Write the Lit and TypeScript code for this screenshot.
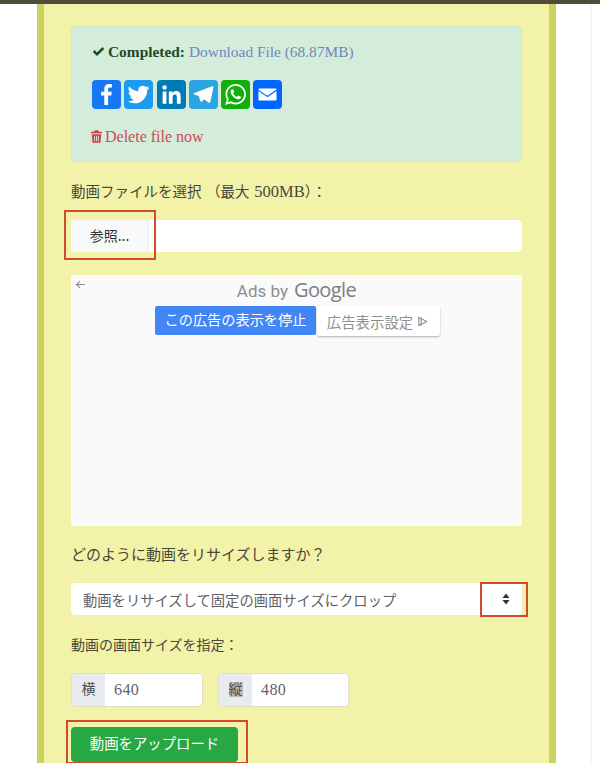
import { LitElement, css, html } from "lit";
import { customElement } from "lit/decorators.js";

const shareIcons = [
  { name: "facebook", bg: "#1877f2", d: "M17.78 27.5V17.008h3.522l.527-4.09h-4.05v-2.61c0-1.182.33-1.99 2.023-1.99h2.166V4.66c-.375-.05-1.66-.16-3.155-.16-3.123 0-5.26 1.905-5.26 5.405v3.016h-3.53v4.09h3.53V27.5h4.223z" },
  { name: "twitter", bg: "#1d9bf0", d: "M28 8.557a9.913 9.913 0 0 1-2.828.775 4.93 4.93 0 0 0 2.166-2.725 9.738 9.738 0 0 1-3.13 1.194 4.92 4.92 0 0 0-3.593-1.55 4.924 4.924 0 0 0-4.794 6.049c-4.09-.21-7.72-2.17-10.15-5.15a4.942 4.942 0 0 0-.665 2.477c0 1.71.87 3.214 2.19 4.1a4.968 4.968 0 0 1-2.23-.616v.06c0 2.39 1.7 4.38 3.952 4.83-.414.115-.85.174-1.297.174-.318 0-.626-.03-.928-.086a4.935 4.935 0 0 0 4.6 3.42 9.893 9.893 0 0 1-6.114 2.107c-.398 0-.79-.023-1.175-.068a13.953 13.953 0 0 0 7.55 2.213c9.056 0 14.01-7.507 14.01-14.013 0-.213-.005-.426-.015-.637.96-.695 1.795-1.56 2.455-2.55z" },
  { name: "linkedin", bg: "#007bb5", d: "M6.227 12.61h4.19v13.48h-4.19V12.61zm2.095-6.7a2.43 2.43 0 0 1 0 4.86c-1.344 0-2.428-1.09-2.428-2.43s1.084-2.43 2.428-2.43m4.72 6.7h4.02v1.84h.058c.56-1.058 1.927-2.176 3.965-2.176 4.238 0 5.02 2.792 5.02 6.42v7.395h-4.183v-6.56c0-1.564-.03-3.574-2.178-3.574-2.18 0-2.514 1.7-2.514 3.46v6.668h-4.187V12.61z" },
  { name: "telegram", bg: "#2ca5e0", d: "M25.515 6.896 6.027 14.41c-1.33.534-1.322 1.276-.243 1.606l5 1.56 1.72 5.66c.226.625.115.873.77.873.506 0 .73-.235 1.012-.51l2.43-2.363 5.056 3.734c.93.514 1.602.25 1.834-.863l3.32-15.638c.338-1.363-.52-1.98-1.41-1.577z", fold: "M11.5 18 21.5 11.5 14.5 18.5 13.5 23z" },
  { name: "whatsapp", bg: "#12af0a", d: "M16.21 4.41C9.973 4.41 4.917 9.465 4.917 15.7c0 2.134.592 4.13 1.62 5.832L4.5 27.59l6.25-2.002a11.241 11.241 0 0 0 5.46 1.404c6.234 0 11.29-5.055 11.29-11.29 0-6.237-5.056-11.292-11.29-11.292zm0 20.69c-1.91 0-3.69-.57-5.173-1.553l-3.61 1.156 1.173-3.49a9.345 9.345 0 0 1-1.79-5.512c0-5.18 4.217-9.4 9.4-9.4 5.183 0 9.397 4.22 9.397 9.4 0 5.188-4.214 9.4-9.398 9.4zm5.293-6.832c-.284-.155-1.673-.906-1.934-1.012-.265-.106-.455-.16-.658.12s-.78.91-.954 1.096c-.176.186-.345.203-.628.048-.282-.154-1.2-.494-2.264-1.517-.83-.795-1.373-1.76-1.53-2.055-.158-.295 0-.445.15-.584.134-.124.3-.326.45-.488.15-.163.203-.28.306-.47.104-.19.06-.36-.005-.506-.066-.147-.59-1.587-.81-2.173-.218-.586-.46-.498-.63-.505-.168-.007-.358-.038-.55-.045-.19-.007-.51.054-.78.332-.277.274-1.05.943-1.1 2.362-.055 1.418.926 2.826 1.064 3.023.137.2 1.874 3.272 4.76 4.537 2.888 1.264 2.9.878 3.43.85.53-.027 1.734-.633 2-1.297.266-.664.287-1.24.22-1.363-.07-.123-.26-.203-.54-.357z" },
  { name: "email", bg: "#0166ff", d: "M26 21.25v-9s-9.1 6.35-9.984 6.68C15.144 18.616 6 12.25 6 12.25v9c0 1.25.266 1.5 1.5 1.5h17c1.266 0 1.5-.22 1.5-1.5zm-.015-10.765c0-.91-.265-1.235-1.485-1.235h-17c-1.255 0-1.5.39-1.5 1.3l.015.14s9.035 6.22 10 6.56c1.02-.395 9.985-6.7 9.985-6.7l-.015-.065z" },
];

@customElement("app-root")
export class AppRoot extends LitElement {
  static styles = css`
    :host {
      display: block;
      position: relative;
      height: 763px;
      overflow: hidden;
      background: #fff;
      font-family: "Liberation Serif", "Noto Sans CJK JP", serif;
      font-size: 16px;
      color: #46483a;
    }
    .top-bar {
      height: 4px;
      background: #504c3a;
    }
    .panel {
      box-sizing: border-box;
      width: 519px;
      height: 759px;
      margin-left: 37px;
      padding: 22px 27px 0;
      background: #f3f2a9;
      border-left: 7px solid #cbd35c;
      border-right: 7px solid #cbd35c;
    }
    .edge {
      position: absolute;
      top: 4px;
      left: 591px;
      width: 1px;
      height: 759px;
      background: #f1f1f1;
    }
    .alert {
      box-sizing: border-box;
      height: 136px;
      padding: 15px 20px 0;
      background: #d4edda;
      border: 1px solid #d0e8cc;
      border-radius: 3px;
      color: #1d4a29;
    }
    .status {
      display: flex;
      align-items: center;
      height: 19px;
      font-size: 15.4px;
    }
    .status svg {
      width: 13px;
      height: 13px;
      margin-right: 3px;
      fill: #1d4a29;
    }
    .status a {
      margin-left: 4px;
      color: #6f86bf;
    }
    .share {
      display: flex;
      gap: 3.3px;
      margin-top: 19px;
    }
    .share span {
      display: block;
      width: 29px;
      height: 29px;
      border-radius: 4px;
    }
    .share svg {
      display: block;
      width: 29px;
      height: 29px;
      fill: #fff;
    }
    .share svg .fold {
      fill: #c3dff0;
    }
    .delete {
      display: flex;
      align-items: center;
      height: 19px;
      margin-top: 18px;
      margin-left: -1px;
      color: #cc4a55;
    }
    .delete svg {
      width: 11px;
      height: 13px;
      margin-right: 3px;
      fill: #cc3d4b;
    }
    .label {
      height: 20px;
      font-size: 14px;
      line-height: 20px;
    }
    .l1 {
      margin-top: 20px;
      font-size: 14.5px;
      word-spacing: 1px;
    }
    .l1 .num {
      font-size: 16.5px;
    }
    .file {
      display: flex;
      height: 32px;
      margin-top: 18px;
      background: #fff;
      border-radius: 4px;
    }
    .file-btn {
      width: 77px;
      border-right: 1px solid #ebebf0;
      background: #f8f9fb;
      font-family: "Noto Sans CJK JP", sans-serif;
      font-size: 14px;
      line-height: 31px;
      text-align: center;
      color: #333;
    }
    .ad {
      position: relative;
      height: 251px;
      margin-top: 23px;
      background: #fafafa;
      font-family: Roboto, "Noto Sans CJK JP", sans-serif;
    }
    .ad-back {
      position: absolute;
      top: 4px;
      left: 4px;
      width: 11px;
      height: 11px;
      fill: none;
      stroke: #8a8a8a;
      stroke-width: 1;
    }
    .ad-by {
      display: flex;
      justify-content: center;
      align-items: baseline;
      gap: 6px;
      height: 31px;
      font-size: 17px;
      line-height: 30px;
      color: #8f8f8f;
    }
    .ad-by b {
      font-family: "Open Sans", sans-serif;
      font-size: 20px;
      font-weight: 500;
      letter-spacing: -0.6px;
      color: #7d7d7d;
    }
    .ad-actions {
      display: flex;
      gap: 1px;
      padding-left: 84px;
    }
    .ad-stop {
      width: 161px;
      height: 29px;
      background: #4285f4;
      border-radius: 2px;
      color: #fff;
      font-size: 14.2px;
      line-height: 29px;
      text-align: center;
    }
    .ad-prefs {
      display: flex;
      align-items: center;
      justify-content: center;
      gap: 4px;
      width: 123px;
      height: 30px;
      padding-right: 2px;
      box-sizing: border-box;
      background: #fff;
      border-radius: 2px;
      box-shadow: 0 1px 2px rgba(0, 0, 0, 0.3);
      color: #8f8f8f;
      font-size: 14.4px;
    }
    .ad-prefs svg {
      width: 11px;
      height: 11px;
      fill: none;
      stroke: #8a8a8a;
      stroke-width: 1.2;
    }
    .l2 {
      margin-top: 19px;
      font-size: 15px;
    }
    .select {
      display: flex;
      align-items: center;
      justify-content: space-between;
      box-sizing: border-box;
      height: 32px;
      margin-top: 18px;
      padding: 0 12px 0 12px;
      background: #fff;
      border-radius: 4px;
      font-size: 14.3px;
      color: #5e6166;
    }
    .select svg {
      width: 8px;
      height: 12px;
      fill: #333;
    }
    .l3 {
      margin-top: 21px;
    }
    .sizes {
      display: flex;
      gap: 15px;
      margin-top: 17px;
    }
    .group {
      display: flex;
      box-sizing: border-box;
      height: 34px;
      background: #fff;
      border: 1px solid #e0e0c8;
      border-radius: 4px;
      overflow: hidden;
    }
    .g1 { width: 132px; }
    .g2 { width: 131px; }
    .addon {
      width: 33px;
      background: #e9ecef;
      font-size: 14px;
      line-height: 32px;
      text-align: center;
      color: #495057;
    }
    .addon span.sel {
      background: #bdbdbd;
    }
    .value {
      padding-left: 9px;
      font-size: 16px;
      line-height: 31px;
      letter-spacing: 0.4px;
      color: #5f6468;
    }
    .upload {
      width: 167px;
      height: 35px;
      margin-top: 20px;
      background: #28a745;
      border-radius: 4px;
      color: #fff;
      font-size: 14.4px;
      line-height: 35px;
      text-align: center;
    }
    .mark {
      position: absolute;
      box-sizing: border-box;
      border: 2px solid #cf4a30;
    }
    .m1 { left: 64px; top: 210px; width: 92px; height: 50px; }
    .m2 { left: 480px; top: 582px; width: 48px; height: 35px; }
    .m3 { left: 66px; top: 720px; width: 182px; height: 44px; }
  `;

  render() {
    return html`
      <div class="top-bar"></div>
      <div class="panel">
        <div class="alert">
          <div class="status">
            <svg viewBox="0 0 16 16"><path d="M1 8.5 3.2 6.2 6.2 9.2 12.8 2.6 15 4.9 6.2 13.6z"></path></svg>
            <strong>Completed:</strong>
            <a>Download File (68.87MB)</a>
          </div>
          <div class="share">
            ${shareIcons.map(
              (icon) => html`
                <span style="background:${icon.bg}">
                  <svg viewBox="0 0 32 32">
                    <path d="${icon.d}"></path>
                    ${icon.fold ? html`<path class="fold" d="${icon.fold}"></path>` : ""}
                  </svg>
                </span>
              `
            )}
          </div>
          <div class="delete">
            <svg viewBox="0 0 14 16"><path d="M5 0h4l1 2h4v2H0V2h4zM1 5h12l-1 11H2zm3 2v7h1.2V7zm2.4 0v7h1.2V7zm2.4 0v7H10V7z"></path></svg>
            Delete file now
          </div>
        </div>

        <div class="label l1">動画ファイルを選択 （最大 <span class="num">500MB</span>）：</div>
        <div class="file"><div class="file-btn">参照...</div></div>

        <div class="ad">
          <svg class="ad-back" viewBox="0 0 10 10"><path d="M9 5H1.5M4.5 2 1.5 5l3 3"></path></svg>
          <div class="ad-by">Ads by <b>Google</b></div>
          <div class="ad-actions">
            <div class="ad-stop">この広告の表示を停止</div>
            <div class="ad-prefs">
              広告表示設定
              <svg viewBox="0 0 12 12"><path d="M2 1.5v9L10.5 6zM4.5 1.5v9"></path></svg>
            </div>
          </div>
        </div>

        <div class="label l2">どのように動画をリサイズしますか？</div>
        <div class="select">
          動画をリサイズして固定の画面サイズにクロップ
          <svg viewBox="0 0 8 12"><path d="M4 0.5 7.5 5h-7zM4 11.5.5 7h7z"></path></svg>
        </div>

        <div class="label l3">動画の画面サイズを指定：</div>
        <div class="sizes">
          <div class="group g1">
            <div class="addon">横</div>
            <div class="value">640</div>
          </div>
          <div class="group g2">
            <div class="addon"><span class="sel">縦</span></div>
            <div class="value">480</div>
          </div>
        </div>
        <div class="upload">動画をアップロード</div>
      </div>
      <div class="edge"></div>
      <div class="mark m1"></div>
      <div class="mark m2"></div>
      <div class="mark m3"></div>
    `;
  }
}
